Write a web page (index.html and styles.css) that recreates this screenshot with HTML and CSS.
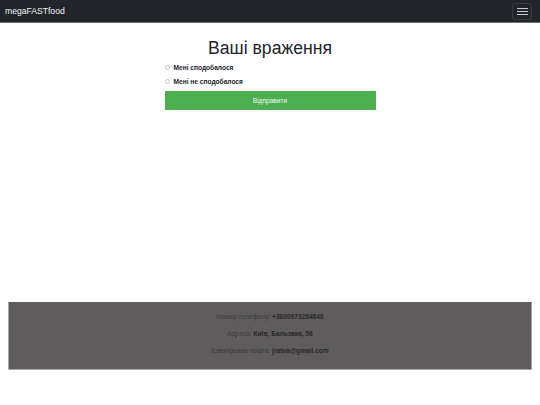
FILE: index.html
```html
<!DOCTYPE html>
<html lang="uk">
<head>
<meta charset="utf-8">
<title>megaFASTfood</title>
<link rel="stylesheet" href="styles.css">
</head>
<body>
<nav class="navbar">
  <span class="brand">megaFASTfood</span>
  <button class="toggler" aria-label="menu">
    <span class="bar"></span><span class="bar"></span><span class="bar"></span>
  </button>
</nav>
<main class="main">
  <form class="form">
    <h1 class="title">Ваші враження</h1>
    <label class="option"><input type="radio" name="r" class="radio"><span>Мені сподобалося</span></label>
    <label class="option"><input type="radio" name="r" class="radio"><span>Мені не сподобалося</span></label>
    <button type="button" class="submit">Відправити</button>
  </form>
</main>
<footer class="footer">
  <p class="row">Номер телефону: <b>+3800973284846</b></p>
  <p class="row">Адреса: <b>Київ, Бальзака, 56</b></p>
  <p class="row">Електронна пошта: <b>jratva@gmail.com</b></p>
</footer>
</body>
</html>
```

FILE: styles.css
```css
html, body {
  margin: 0;
  padding: 0;
  background: #fff;
  font-family: "Liberation Sans", Arial, sans-serif;
}
.navbar {
  height: 23px;
  background: #212529;
  display: flex;
  align-items: center;
  justify-content: space-between;
  padding: 0 8px 0 5px;
  border-bottom: 1px solid #6c6f72;
  box-sizing: border-box;
}
.brand {
  color: #f2f2f2;
  font-size: 8.6px;
  margin-top: -1px;
}
.toggler {
  width: 20px;
  height: 17px;
  border: 1px solid #3a3e42;
  border-radius: 3px;
  background: transparent;
  padding: 0;
  display: flex;
  flex-direction: column;
  align-items: center;
  justify-content: center;
  gap: 2px;
}
.bar {
  display: block;
  width: 11px;
  height: 1px;
  background: #c8c9ca;
}
.main {
  height: 279px;
  display: flex;
  justify-content: center;
}
.form {
  width: 211px;
  display: flex;
  flex-direction: column;
  padding-top: 14px;
}
.title {
  margin: 0 0 1px;
  font-weight: normal;
  font-size: 17.6px;
  line-height: 22px;
  text-align: center;
  color: #212529;
}
.option {
  display: flex;
  align-items: center;
  font-size: 6.6px;
  font-weight: bold;
  color: #212529;
  height: 14px;
}
.radio {
  width: 5px;
  height: 5px;
  margin: 0 4px 0 0;
  appearance: none;
  border: 1px solid #c4c4c4;
  border-radius: 50%;
}
.submit {
  margin-top: 3px;
  height: 19px;
  background: #4caf50;
  border: none;
  color: #f0f8f0;
  font-family: "Liberation Sans", Arial, sans-serif;
  font-size: 6.6px;
}
.footer {
  margin: 0 8px;
  height: 68px;
  background: #5e5c5d;
  border: 1px solid #5e5c5d;
  border-left-color: #a9a9a9;
  border-bottom-color: #a9a9a9;
  border-right-color: #a9a9a9;
  box-sizing: border-box;
  display: flex;
  flex-direction: column;
  align-items: center;
  padding-top: 9px;
  gap: 8px;
}
.row {
  margin: 0;
  font-size: 6.6px;
  line-height: 9px;
  color: #3c3a3b;
}
.row b {
  color: #2a2829;
}
```
